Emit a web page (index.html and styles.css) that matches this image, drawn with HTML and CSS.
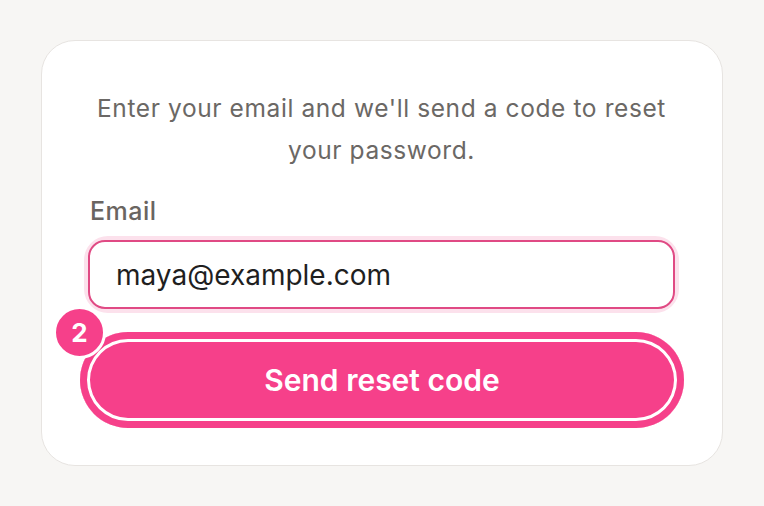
FILE: index.html
```html
<!DOCTYPE html>
<html lang="en">
<head>
<meta charset="utf-8">
<title>Reset password</title>
<link rel="stylesheet" href="styles.css">
</head>
<body>
<main class="card">
  <p class="intro">Enter your email and we'll send a code to reset your password.</p>
  <label class="label" for="email">Email</label>
  <div class="field">
    <input id="email" class="input" type="email" value="maya@example.com">
  </div>
  <div class="action">
    <button class="btn" type="button">Send reset code</button>
    <span class="badge">2</span>
  </div>
</main>
</body>
</html>
```
FILE: styles.css
```css
* { box-sizing: border-box; }
html, body { height: 100%; }
body {
  margin: 0;
  padding: 40px 41px 40px 41px;
  background: #f7f6f4;
  font-family: Inter, "Noto Sans", sans-serif;
}
.card {
  height: 426px;
  background: #ffffff;
  border: 1.5px solid #e7e4e1;
  border-radius: 34px;
  padding: 46px 47px 0 46px;
  display: flex;
  flex-direction: column;
}
.intro {
  margin: 0;
  text-align: center;
  font-size: 24.5px;
  letter-spacing: 0.6px;
  line-height: 42px;
  color: #6b6865;
  padding: 0 4px;
}
.label {
  margin-top: 26px;
  padding-left: 2px;
  font-size: 25px;
  letter-spacing: 0.5px;
  font-weight: 500;
  color: #6a6561;
  line-height: 28px;
}
.field {
  margin-top: 15px;
  border-radius: 20px;
  box-shadow: 0 0 0 4px #fce1ec;
}
.input {
  display: block;
  width: 100%;
  height: 69px;
  border: 2px solid #e04a84;
  border-radius: 17px;
  padding: 0 26px;
  font-family: inherit;
  font-size: 28px;
  color: #1f1f1f;
  background: #fff;
  outline: none;
}
.action {
  position: relative;
  margin: 23px -9px 0 -8px;
}
.btn {
  display: block;
  width: 100%;
  height: 96px;
  border: none;
  border-radius: 48px;
  background: #f6408a;
  box-shadow: inset 0 0 0 7px #f6408a, inset 0 0 0 10px #ffffff;
  color: #ffffff;
  font-family: inherit;
  font-size: 30px;
  font-weight: 600;
  cursor: pointer;
}
.badge {
  position: absolute;
  left: -27px;
  top: -26px;
  width: 53px;
  height: 53px;
  border-radius: 50%;
  background: #f6408a;
  border: 3px solid #ffffff;
  color: #ffffff;
  font-size: 26px;
  font-weight: 700;
  display: flex;
  align-items: center;
  justify-content: center;
}
```
